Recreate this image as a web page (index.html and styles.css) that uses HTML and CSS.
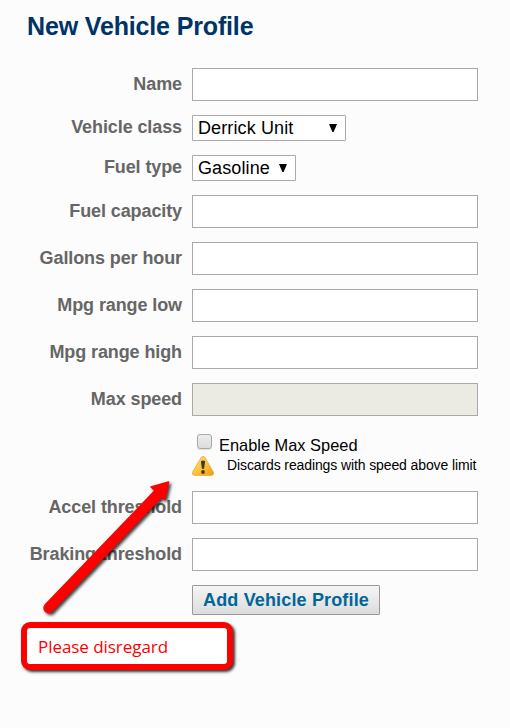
FILE: index.html
```html
<!DOCTYPE html>
<html lang="en">

<head>
    <meta charset="UTF-8">
    <meta name="viewport" content="width=device-width, initial-scale=1.0">
    <title>New Vehicle Profile</title>
    <link rel="stylesheet" href="styles.css">
</head>

<body>

    <h1>New Vehicle Profile</h1>

    <form id="vehicleForm" onsubmit="return false">
        <div class="row">
            <label for="name">Name</label>
            <input type="text" id="name" name="name">
        </div>
        <div class="row">
            <label for="vehicleClass">Vehicle class</label>
            <div class="select">
                <select class="wide" id="vehicleClass" name="vehicleClass">
                    <option>Derrick Unit</option>
                </select>
                <svg class="caret" viewBox="0 0 8 8"><path d="M0 0H8L4.6 8H3.4Z"/></svg>
            </div>
        </div>
        <div class="row">
            <label for="fuelType">Fuel type</label>
            <div class="select">
                <select id="fuelType" name="fuelType">
                    <option>Gasoline</option>
                </select>
                <svg class="caret" viewBox="0 0 8 8"><path d="M0 0H8L4.6 8H3.4Z"/></svg>
            </div>
        </div>
        <div class="row">
            <label for="fuelCapacity">Fuel capacity</label>
            <input type="text" id="fuelCapacity" name="fuelCapacity">
        </div>
        <div class="row">
            <label for="gph">Gallons per hour</label>
            <input type="text" id="gph" name="gph">
        </div>
        <div class="row">
            <label for="mpgLow">Mpg range low</label>
            <input type="text" id="mpgLow" name="mpgLow">
        </div>
        <div class="row">
            <label for="mpgHigh">Mpg range high</label>
            <input type="text" id="mpgHigh" name="mpgHigh">
        </div>
        <div class="row">
            <label for="maxSpeed">Max speed</label>
            <input type="text" id="maxSpeed" name="maxSpeed" disabled>
        </div>

        <div class="max-speed">
            <div class="enable">
                <input type="checkbox" id="enableMax" name="enableMax">
                <label for="enableMax">Enable Max Speed</label>
            </div>
            <div class="hint">
                <svg class="warning" viewBox="0 0 22 20">
                    <defs>
                        <linearGradient id="amber" x1="0" y1="0" x2="1" y2="1">
                            <stop offset="0" stop-color="#ffe28a"/>
                            <stop offset=".55" stop-color="#fcc236"/>
                            <stop offset="1" stop-color="#f09a12"/>
                        </linearGradient>
                    </defs>
                    <path d="M9.2 1.3Q11-.6 12.8 1.3L21.3 16Q22.4 19.2 19.5 19.4H2.5Q-.4 19.2.7 16Z" fill="url(#amber)" stroke="#e9a12c" stroke-width=".7"/>
                    <path d="M8.9 5.2Q11 3.9 13.1 5.2L12.1 12.8H9.9Z" fill="#3b3b35"/>
                    <circle cx="11" cy="16" r="1.9" fill="#3b3b35"/>
                </svg>
                <span>Discards readings with speed above limit</span>
            </div>
        </div>

        <div class="row">
            <label for="accel">Accel threshold</label>
            <input type="text" id="accel" name="accel">
        </div>
        <div class="row">
            <label for="braking">Braking threshold</label>
            <input type="text" id="braking" name="braking">
        </div>
        <button type="submit">Add Vehicle Profile</button>
    </form>

    <!-- Note laid over the form -->
    <svg class="arrow" viewBox="0 0 150 150">
        <path d="M18.5 138L127 25" stroke="#fe0000" stroke-width="10.5" stroke-linecap="round"/>
        <path d="M138.500 12L134.500 29.500L121 17Z" fill="#fe0000" stroke="#fe0000" stroke-width="1.500" stroke-linejoin="round"/>
    </svg>
    <div class="note">Please disregard</div>

</body>

</html>
```

FILE: styles.css
```css
body {
    font-family: "Liberation Sans", Arial, sans-serif;
    margin: 0;
    padding: 10px 32px 0 27px;
    background-color: #fcfcfc;
    position: relative;
    height: 728px;
    box-sizing: border-box;
    overflow: hidden;
}

h1 {
    margin: 0 0 26px;
    font-size: 25px;
    line-height: 32px;
    letter-spacing: -0.15px;
    color: #003366;
    white-space: nowrap;
}

form {
    display: flex;
    flex-direction: column;
    gap: 14px;
}

.row {
    display: flex;
    align-items: center;
    gap: 10px;
}

.row label {
    width: 155px;
    text-align: right;
    font-size: 18px;
    line-height: 20px;
    letter-spacing: -0.1px;
    padding-bottom: 2px;
    font-weight: bold;
    color: #666;
    white-space: nowrap;
}

input[type="text"] {
    width: 286px;
    height: 33px;
    box-sizing: border-box;
    border: 1px solid #a9a9a9;
    background-color: #fff;
    padding: 4px;
    font-size: 18px;
}

input[type="text"]:disabled {
    background-color: #ebebe4;
}

.select {
    position: relative;
    height: 26px;
}

select {
    appearance: none;
    width: 104px;
    height: 26px;
    box-sizing: border-box;
    border: 1px solid #a9a9a9;
    border-radius: 1px;
    background-color: #fff;
    color: #000;
    padding: 0 5px;
    font-family: inherit;
    font-size: 18px;
    letter-spacing: 0.12px;
}

select.wide {
    width: 154px;
}

.caret {
    position: absolute;
    right: 9px;
    top: 9px;
    width: 8px;
    height: 8px;
}

.max-speed {
    height: 47px;
    margin-left: 165px;
}

.enable {
    display: flex;
    height: 26px;
    padding-left: 5px;
}

.enable input {
    appearance: none;
    width: 15px;
    height: 15px;
    margin: 4px 7px 0 0;
    border: 1px solid #a8a8a8;
    border-radius: 3px;
    background: linear-gradient(#ececec, #dcdcdc);
    box-shadow: 0 1px 1px rgba(0, 0, 0, 0.12);
}

.enable label {
    font-size: 16.4px;
    line-height: 20px;
    padding-top: 5px;
}

.hint {
    display: flex;
    font-size: 14px;
    line-height: 18px;
    letter-spacing: -0.11px;
    white-space: nowrap;
}

.warning {
    flex-shrink: 0;
    width: 22px;
    height: 20px;
    margin-right: 13px;
}

button {
    width: 188px;
    height: 30px;
    margin-left: 165px;
    padding: 0;
    border: 1px solid #999;
    border-radius: 1px;
    background: linear-gradient(#f5f5f5, #dcdcdc);
    color: #006699;
    font-family: inherit;
    font-size: 18px;
    letter-spacing: 0.15px;
    font-weight: bold;
}

.arrow {
    position: absolute;
    left: 30px;
    top: 470px;
    width: 150px;
    height: 150px;
    filter: drop-shadow(2px 2px 1.5px rgba(0, 0, 0, 0.75));
}

.note {
    position: absolute;
    left: 21px;
    top: 622px;
    width: 212px;
    height: 48px;
    box-sizing: border-box;
    border: 6px solid #fe0000;
    border-radius: 9px;
    background-color: #fff;
    padding-left: 11px;
    font-family: "Open Sans", "Segoe UI", sans-serif;
    font-size: 17px;
    line-height: 37px;
    letter-spacing: -0.05px;
    color: #fe0000;
    box-shadow: 2px 2px 3px rgba(0, 0, 0, 0.8);
}
```
